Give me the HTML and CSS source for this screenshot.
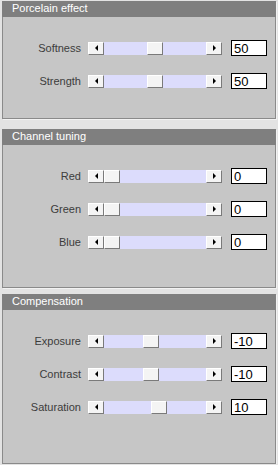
FILE: index.html
```html
<!DOCTYPE html>
<html lang="en">
<head>
    <meta charset="UTF-8">
    <meta name="viewport" content="width=device-width, initial-scale=1.0">
    <title>Filter settings</title>
    <link rel="stylesheet" href="styles.css">
</head>
<body>
    <div class="panel panel-porcelain">
        <div class="panel-title">Porcelain effect</div>
        <div class="panel-body">
            <div class="row">
                <span class="row-label">Softness</span>
                <div class="slider">
                    <span class="arrow arrow-left"></span>
                    <div class="track"><span class="thumb" style="margin-left: 43px"></span></div>
                    <span class="arrow arrow-right"></span>
                </div>
                <input type="text" class="value" value="50">
            </div>
            <div class="row">
                <span class="row-label">Strength</span>
                <div class="slider">
                    <span class="arrow arrow-left"></span>
                    <div class="track"><span class="thumb" style="margin-left: 43px"></span></div>
                    <span class="arrow arrow-right"></span>
                </div>
                <input type="text" class="value" value="50">
            </div>
        </div>
    </div>

    <div class="panel panel-channel">
        <div class="panel-title">Channel tuning</div>
        <div class="panel-body">
            <div class="row">
                <span class="row-label">Red</span>
                <div class="slider">
                    <span class="arrow arrow-left"></span>
                    <div class="track"><span class="thumb" style="margin-left: 0px"></span></div>
                    <span class="arrow arrow-right"></span>
                </div>
                <input type="text" class="value" value="0">
            </div>
            <div class="row">
                <span class="row-label">Green</span>
                <div class="slider">
                    <span class="arrow arrow-left"></span>
                    <div class="track"><span class="thumb" style="margin-left: 0px"></span></div>
                    <span class="arrow arrow-right"></span>
                </div>
                <input type="text" class="value" value="0">
            </div>
            <div class="row">
                <span class="row-label">Blue</span>
                <div class="slider">
                    <span class="arrow arrow-left"></span>
                    <div class="track"><span class="thumb" style="margin-left: 0px"></span></div>
                    <span class="arrow arrow-right"></span>
                </div>
                <input type="text" class="value" value="0">
            </div>
        </div>
    </div>

    <div class="panel panel-comp">
        <div class="panel-title">Compensation</div>
        <div class="panel-body">
            <div class="row">
                <span class="row-label">Exposure</span>
                <div class="slider">
                    <span class="arrow arrow-left"></span>
                    <div class="track"><span class="thumb" style="margin-left: 39px"></span></div>
                    <span class="arrow arrow-right"></span>
                </div>
                <input type="text" class="value" value="-10">
            </div>
            <div class="row">
                <span class="row-label">Contrast</span>
                <div class="slider">
                    <span class="arrow arrow-left"></span>
                    <div class="track"><span class="thumb" style="margin-left: 39px"></span></div>
                    <span class="arrow arrow-right"></span>
                </div>
                <input type="text" class="value" value="-10">
            </div>
            <div class="row">
                <span class="row-label">Saturation</span>
                <div class="slider">
                    <span class="arrow arrow-left"></span>
                    <div class="track"><span class="thumb" style="margin-left: 47px"></span></div>
                    <span class="arrow arrow-right"></span>
                </div>
                <input type="text" class="value" value="10">
            </div>
        </div>
    </div>
</body>
</html>
```

FILE: styles.css
```css
* {
    margin: 0;
    padding: 0;
    box-sizing: border-box;
}

body {
    width: 278px;
    padding: 1px 2px 0;
    background-color: #e3e3e3;
    font-family: "Liberation Sans", Arial, sans-serif;
    font-size: 11px;
}

.panel {
    background: #c6c6c6;
    border: 1px solid #8a8a8a;
    border-top: none;
    box-shadow: 1px 1px 0 #f2f2f2;
}

.panel-porcelain {
    height: 118px;
    margin-bottom: 10px;
}

.panel-channel {
    height: 159px;
    margin-bottom: 6px;
}

.panel-comp {
    height: 170px;
}

.panel-title {
    height: 16px;
    line-height: 15px;
    padding-left: 10px;
    margin: 0 -1px;
    background: #7f7f7f;
    color: #fff;
}

.panel-body {
    padding-top: 23px;
    display: flex;
    flex-direction: column;
    gap: 17px;
}

.row {
    height: 16px;
    display: flex;
    align-items: center;
}

.row-label {
    width: 78px;
    text-align: right;
    color: #3c3c3c;
}

.slider {
    display: flex;
    height: 13px;
    margin-left: 7px;
}

.track {
    width: 102px;
    height: 13px;
    display: flex;
    background: #dcdcfc;
}

.arrow,
.thumb {
    width: 16px;
    height: 13px;
    background: #f4f4f4;
    border: 1px solid;
    border-color: #ffffff #7a7a7a #7a7a7a #ffffff;
}

.arrow {
    display: flex;
    align-items: center;
    justify-content: center;
}

.arrow::before {
    content: "";
    border-top: 3px solid transparent;
    border-bottom: 3px solid transparent;
}

.arrow-left::before {
    border-right: 3px solid #000;
}

.arrow-right::before {
    border-left: 3px solid #000;
}

.value {
    width: 36px;
    height: 16px;
    margin-left: 9px;
    padding-left: 2px;
    border: 1px solid #000;
    background: #fff;
    color: #000;
    font-family: "Liberation Sans", Arial, sans-serif;
    font-size: 13px;
    outline: none;
}
```
